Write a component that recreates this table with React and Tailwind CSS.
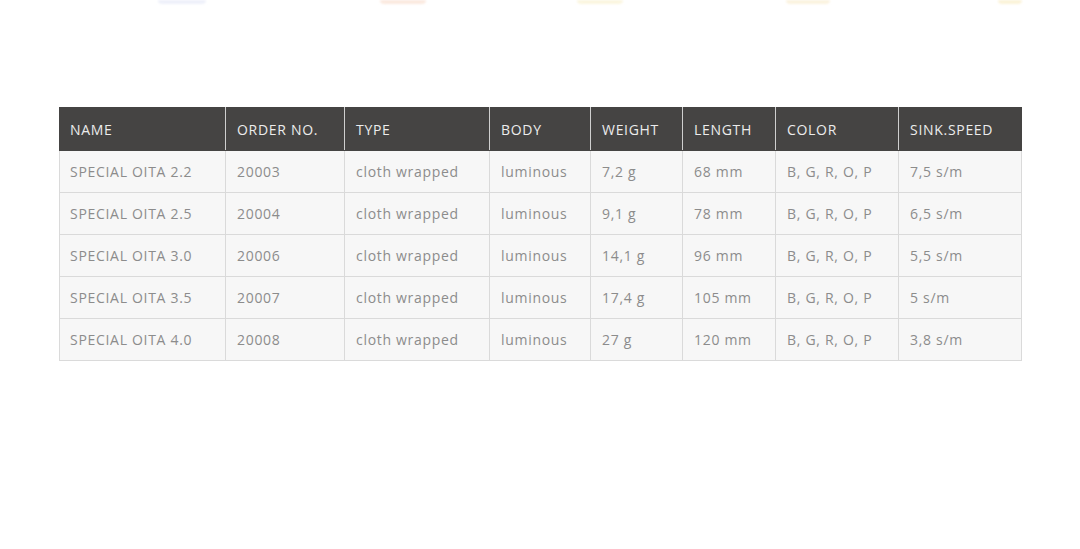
import React from "react";

const cols = [166, 119, 145, 101, 92, 93, 123, 123];
const head = ["NAME", "ORDER NO.", "TYPE", "BODY", "WEIGHT", "LENGTH", "COLOR", "SINK.SPEED"];
const rows = [
  ["SPECIAL OITA 2.2", "20003", "cloth wrapped", "luminous", "7,2 g", "68 mm", "B, G, R, O, P", "7,5 s/m"],
  ["SPECIAL OITA 2.5", "20004", "cloth wrapped", "luminous", "9,1 g", "78 mm", "B, G, R, O, P", "6,5 s/m"],
  ["SPECIAL OITA 3.0", "20006", "cloth wrapped", "luminous", "14,1 g", "96 mm", "B, G, R, O, P", "5,5 s/m"],
  ["SPECIAL OITA 3.5", "20007", "cloth wrapped", "luminous", "17,4 g", "105 mm", "B, G, R, O, P", "5 s/m"],
  ["SPECIAL OITA 4.0", "20008", "cloth wrapped", "luminous", "27 g", "120 mm", "B, G, R, O, P", "3,8 s/m"],
];

export default function App() {
  return (
    <div className="w-[1080px] h-[549px] bg-white overflow-hidden" style={{ fontFamily: '"Open Sans", sans-serif' }}>
      <div className="flex items-start h-[107px] pl-[158px]">
        <div className="w-[48px] h-[4px] rounded-b-full bg-[#eef0fa] blur-[1px]" />
        <div className="ml-[174px] w-[46px] h-[4px] rounded-b-full bg-[#fbe9df] blur-[1px]" />
        <div className="ml-[151px] w-[46px] h-[4px] rounded-b-full bg-[#fbf6df] blur-[1px]" />
        <div className="ml-[163px] w-[44px] h-[4px] rounded-b-full bg-[#fbf3df] blur-[1px]" />
        <div className="ml-[168px] w-[24px] h-[4px] rounded-b-full bg-[#fbf3d8] blur-[1px]" />
      </div>
      <div className="pl-[59px]">
        <table className="table-fixed border-collapse w-[963px] text-[14px] tracking-[0.7px]">
          <colgroup>
            {cols.map((w, i) => (
              <col key={i} style={{ width: w }} />
            ))}
          </colgroup>
          <thead>
            <tr className="h-[43px] bg-[#454443]">
              {head.map((h, i) => (
                <th key={i} className="text-left font-normal text-[#ececec] px-[11px] first:pl-[10px] border-x border-[#cfcfcf] border-y border-y-[#454443] first:border-l-[#454443] last:border-r-[#454443]">
                  {h}
                </th>
              ))}
            </tr>
          </thead>
          <tbody>
            {rows.map((r, ri) => (
              <tr key={ri} className="h-[42px] bg-[#f7f7f7]">
                {r.map((c, ci) => (
                  <td key={ci} className="text-[#8c8c8c] pl-[11px] pr-[6px] first:pl-[10px] border border-[#dadada] whitespace-nowrap">
                    {c}
                  </td>
                ))}
              </tr>
            ))}
          </tbody>
        </table>
      </div>
    </div>
  );
}
